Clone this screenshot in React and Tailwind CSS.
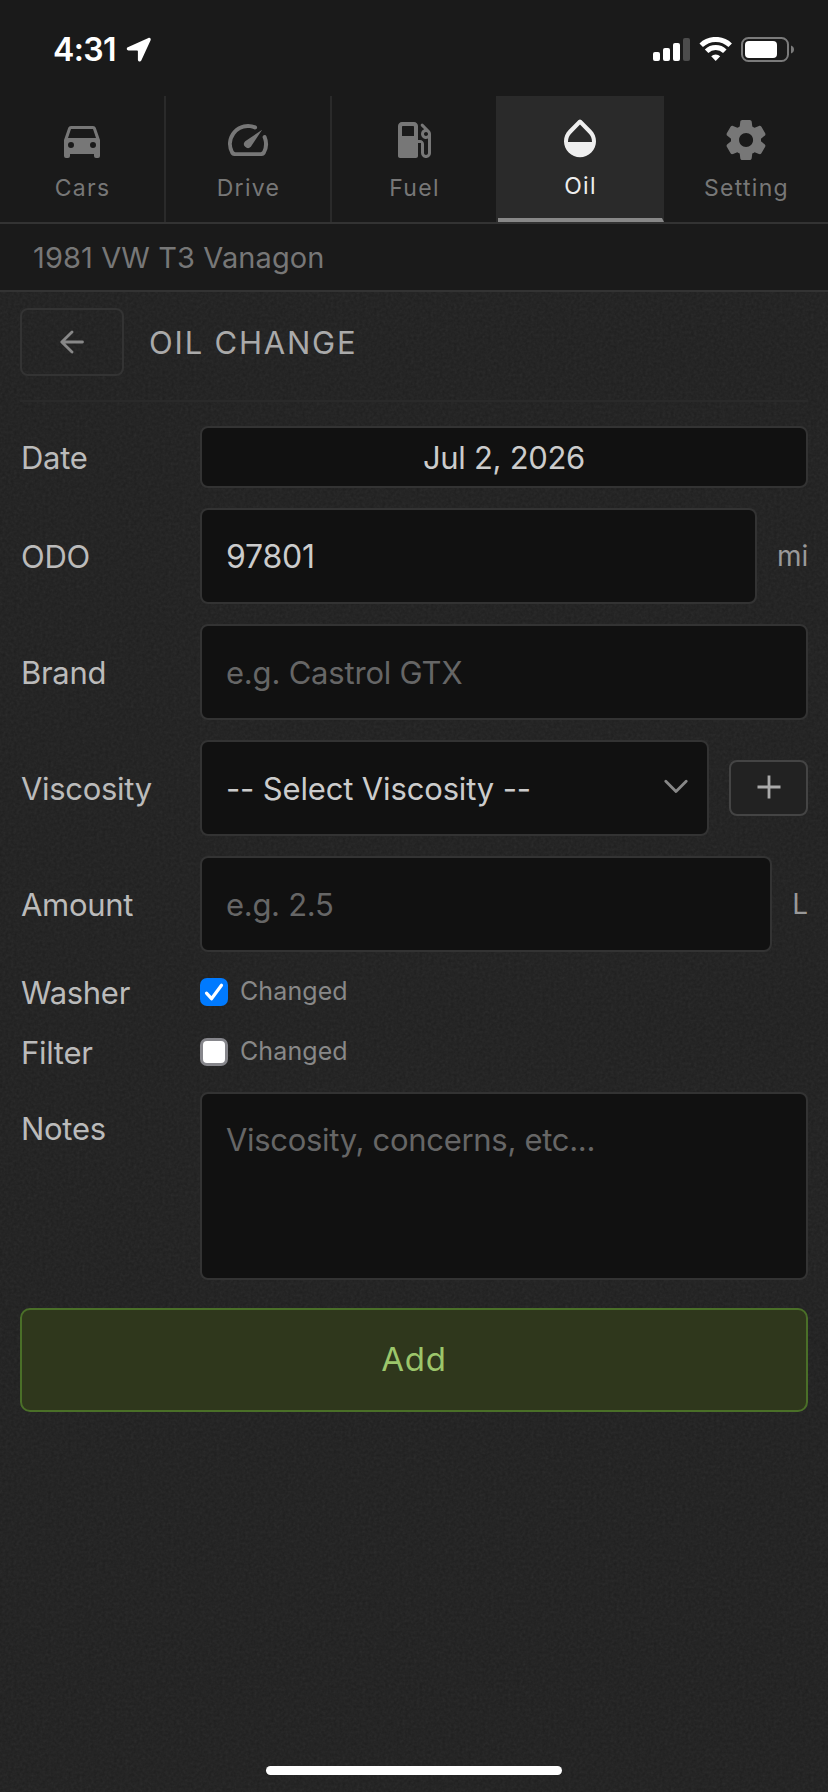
import { useId } from "react";

const MDI = {
  car: "M5,11L6.5,6.5H17.5L19,11M17.5,16A1.5,1.5 0 0,1 16,14.5A1.5,1.5 0 0,1 17.5,13A1.5,1.5 0 0,1 19,14.5A1.5,1.5 0 0,1 17.5,16M6.5,16A1.5,1.5 0 0,1 5,14.5A1.5,1.5 0 0,1 6.5,13A1.5,1.5 0 0,1 8,14.5A1.5,1.5 0 0,1 6.5,16M18.92,6C18.72,5.42 18.16,5 17.5,5H6.5C5.84,5 5.29,5.42 5.08,6L3,12V20A1,1 0 0,0 4,21H5A1,1 0 0,0 6,20V19H18V20A1,1 0 0,0 19,21H20A1,1 0 0,0 21,20V12L18.92,6Z",
  speed: "M19.46 10a1 1 0 0 0-.07 1 7.55 7.55 0 0 1 .52 1.81 8 8 0 0 1-.69 4.73 1 1 0 0 1-.89.53H5.68a1 1 0 0 1-.89-.54A8 8 0 0 1 13 6.06a7.69 7.69 0 0 1 2.11.56 1 1 0 0 0 1-.07 1 1 0 0 0-.17-1.76A10 10 0 0 0 3.35 19a2 2 0 0 0 1.72 1h13.85a2 2 0 0 0 1.74-1 10 10 0 0 0 .55-8.89 1 1 0 0 0-1.75-.11zM10.59 12.59a2 2 0 0 0 2.83 2.83l5.66-8.49z",
  fuel: "M19.77 7.23l.01-.01-3.19-3.19a.75.75 0 0 0-1.06 1.06l1.58 1.58c-1.05.4-1.76 1.47-1.58 2.71.15 1.06 1.04 1.96 2.1 2.1.5.07.95 0 1.37-.19v7.21c0 .55-.45 1-1 1s-1-.45-1-1V14c0-1.1-.9-2-2-2h-1V5c0-1.1-.9-2-2-2H6c-1.1 0-2 .9-2 2v15c0 .55.45 1 1 1h8c.55 0 1-.45 1-1v-6.5h1.5v4.86c0 1.31.94 2.5 2.24 2.63 1.5.15 2.76-1.02 2.76-2.49V9c0-.69-.28-1.32-.73-1.77zM12 10H6V5.5c0-.28.22-.5.5-.5h5c.28 0 .5.22.5.5V10zm6 0c-.55 0-1-.45-1-1s.45-1 1-1 1 .45 1 1-.45 1-1 1z",
  oil: "M17.66 8L12.7 3.03c-.39-.39-1.02-.39-1.41 0L6.34 8C4.78 9.56 4 11.64 4 13.64s.78 4.11 2.34 5.67 3.61 2.35 5.66 2.35 4.1-.79 5.66-2.35S20 15.64 20 13.64 19.22 9.56 17.66 8zM6 14c.01-2 .62-3.27 1.76-4.4L12 5.27l4.24 4.38C17.38 10.77 17.99 12 18 14H6z",
  settings: "M19.5 12c0-.23-.01-.45-.03-.68l1.86-1.41c.4-.3.51-.86.26-1.3l-1.87-3.23c-.25-.44-.79-.62-1.25-.42l-2.15.91c-.37-.26-.76-.49-1.17-.68l-.29-2.31C14.8 2.38 14.37 2 13.87 2h-3.73c-.51 0-.94.38-1 .88l-.29 2.31c-.41.19-.8.42-1.17.68l-2.15-.91c-.46-.2-1-.02-1.25.42L2.41 8.62c-.25.44-.14.99.26 1.3l1.86 1.41c-.02.22-.03.44-.03.67s.01.45.03.68l-1.86 1.41c-.4.3-.51.86-.26 1.3l1.87 3.23c.25.44.79.62 1.25.42l2.15-.91c.37.26.76.49 1.17.68l.29 2.31c.06.5.49.88.99.88h3.73c.5 0 .93-.38.99-.88l.29-2.31c.41-.19.8-.42 1.17-.68l2.15.91c.46.2 1 .02 1.25-.42l1.87-3.23c.25-.44.14-.99-.26-1.3l-1.86-1.41c.03-.23.04-.45.04-.68zm-7.46 3.5c-1.93 0-3.5-1.57-3.5-3.5s1.57-3.5 3.5-3.5 3.5 1.57 3.5 3.5-1.57 3.5-3.5 3.5z",
};

const TABS = [
  { label: "Cars", icon: MDI.car },
  { label: "Drive", icon: MDI.speed },
  { label: "Fuel", icon: MDI.fuel },
  { label: "Oil", icon: MDI.oil, active: true },
  { label: "Setting", icon: MDI.settings },
];

function StatusBar() {
  return (
    <div className="flex h-24 items-start justify-between pl-[53px] pr-[33px] text-white">
      <div className="flex items-center pt-[30px]">
        <span className="w-[73px] whitespace-nowrap text-[32px] leading-10 font-semibold tracking-[-0.6px]">4:31</span>
        <svg className="block h-[26px] w-[26px]" viewBox="0 0 26 26" fill="currentColor">
          <path d="M22.400 1 1.800 10.200C.200 11 .700 13.400 2.500 13.400h8.600c.500 0 .800.300.800.800v8.500c0 2 2.600 2.500 3.400.800L24.600 3.200C25.300 1.600 23.900.300 22.400 1z" />
        </svg>
      </div>
      <div className="flex items-start pt-[37px]">
        <svg className="block h-[25px] w-[38px]" viewBox="0 0 38 25" fill="currentColor">
          <rect x="0" y="15" width="7" height="9" rx="2" />
          <rect x="10" y="11" width="7" height="13" rx="2" />
          <rect x="20" y="6" width="7" height="18" rx="2" />
          <rect x="30" y="1" width="7" height="23" rx="2" opacity="0.22" />
        </svg>
        <svg className="ml-[8px] block h-[25px] w-[34px]" viewBox="0 0 34 25" fill="none" stroke="currentColor">
          <path d="M2.200 8.200a21 21 0 0 1 29 0" strokeWidth="5" />
          <path d="M7.600 14.200a13 13 0 0 1 18.200 0" strokeWidth="5" />
          <path d="M12.200 19.200a6.600 6.600 0 0 1 9 0L16.700 24z" fill="currentColor" stroke="none" />
        </svg>
        <svg className="ml-[8px] block h-[25px] w-[54px]" viewBox="0 0 54 25">
          <rect x="1" y="1" width="46" height="23" rx="6.500" fill="none" stroke="#7b7b7b" strokeWidth="2" />
          <rect x="4" y="4" width="32" height="17" rx="4" fill="#fff" />
          <path d="M50 8.500c2 .7 3 2.200 3 4s-1 3.300-3 4z" fill="#7b7b7b" />
        </svg>
      </div>
    </div>
  );
}

function Tab({ label, icon, active, last }) {
  const tone = active
    ? "border-b-4 border-b-[#888] bg-[#2a2a2a] text-[#eee]"
    : "pt-[2px] text-[#777]";
  const side = last ? "" : "border-r-2 border-r-[#2a2a2a]";
  return (
    <button className={`flex h-[126px] flex-1 flex-col items-center ${tone} ${side}`}>
      <svg className="mt-[18px] block size-12 shrink-0" viewBox="0 0 24 24" fill="currentColor" fillRule="evenodd">
        <path d={icon} />
      </svg>
      <span className="mt-[6px] pl-[1px] text-[23px] leading-9 tracking-[1.3px]">{label}</span>
    </button>
  );
}

function Row({ label, className = "", children }) {
  return (
    <div className={`flex items-center ${className}`}>
      <label className="w-[180px] shrink-0 pt-[2px] pl-[1px] text-[31px] leading-10 tracking-[-0.3px] text-[#bbb]">{label}</label>
      <div className="flex min-w-0 flex-1 items-center">{children}</div>
    </div>
  );
}

function Field({ className = "", children }) {
  return (
    <div className={`flex min-w-0 flex-1 rounded-lg border-2 border-[#333] bg-[#111] leading-10 ${className}`}>
      {children}
    </div>
  );
}

function Grain() {
  const id = useId();
  return (
    <svg className="pointer-events-none absolute inset-0 h-full w-full opacity-[0.08]">
      <filter id={id}>
        <feTurbulence type="fractalNoise" baseFrequency="0.35" numOctaves="2" />
        <feColorMatrix type="saturate" values="0" />
      </filter>
      <rect width="100%" height="100%" filter={`url(#${id})`} />
    </svg>
  );
}

export default function App() {
  return (
    <div className="relative flex h-[1792px] w-[828px] flex-col bg-[#1f1f1f] font-['Inter',sans-serif]">
      <Grain />
      <header className="relative bg-[#1a1a1a]">
        <StatusBar />
        <nav className="flex border-b-2 border-[#333]">
          {TABS.map((t, i) => (
            <Tab key={t.label} {...t} last={i === TABS.length - 1} />
          ))}
        </nav>
        <div className="flex h-[68px] items-center border-b-2 border-[#333] pt-[2px] pl-[33px] text-[29px] tracking-[0.1px] text-[#777]">
          1981 VW T3 Vanagon
        </div>
      </header>
      <main className="relative flex-1 px-5">
        <div className="flex h-[110px] items-start border-b-2 border-[#2a2a2a] pt-4">
          <button className="flex h-[68px] w-[104px] items-center justify-center rounded-lg border-2 border-[#333] text-[#888]">
            <svg className="block h-6 w-6" viewBox="0 0 24 24" fill="none" stroke="currentColor" strokeWidth="2.800" strokeLinecap="round" strokeLinejoin="round">
              <path d="M22.500 12H2M12 2 1.800 12 12 22" />
            </svg>
          </button>
          <h1 className="ml-6 pt-[15px] pl-[1px] text-[31px] leading-10 tracking-[1.8px] text-[#aaa]">OIL CHANGE</h1>
        </div>
        <div className="flex flex-col gap-5 pt-6">
          <Row label="Date">
            <Field className="h-[62px] items-center justify-center pt-[2px] text-[31px] tracking-[-0.3px] text-[#ccc]">Jul 2, 2026</Field>
          </Row>
          <Row label="ODO">
            <Field className="h-24 items-center pt-[2px] pl-6 text-[32px] tracking-[-0.2px] text-[#ccc]">97801</Field>
            <span className="ml-5 w-[31px] text-right text-[28px] text-[#999]">mi</span>
          </Row>
          <Row label="Brand">
            <Field className="h-24 items-center pt-[2px] pl-6 text-[31px] tracking-[-0.2px] text-[#666]">e.g. Castrol GTX</Field>
          </Row>
          <Row label="Viscosity">
            <Field className="h-24 items-center justify-between pl-6 pr-[19px] text-[31px] tracking-[-0.15px] text-[#ccc]">
              <span className="pt-[2px]">-- Select Viscosity --</span>
              <svg className="mb-1 block h-[15px] w-6" viewBox="0 0 24 15" fill="none" stroke="#888" strokeWidth="2.800" strokeLinecap="round" strokeLinejoin="round">
                <path d="m1.800 2.200 10.200 10.300 10.200-10.300" />
              </svg>
            </Field>
            <button className="ml-5 flex h-14 w-[79px] items-center justify-center rounded-lg border-2 border-[#444] bg-[#222] text-[#aaa]">
              <svg className="mb-[2px] block size-6" viewBox="0 0 24 24" stroke="currentColor" strokeWidth="2.800">
                <path d="M12 .5v23M.5 12h23" />
              </svg>
            </button>
          </Row>
          <Row label="Amount">
            <Field className="h-24 items-center pt-[2px] pl-6 text-[31px] tracking-[-0.3px] text-[#666]">e.g. 2.5</Field>
            <span className="ml-5 w-4 text-right text-[28px] text-[#999]">L</span>
          </Row>
          <Row label="Washer" className="h-10">
            <svg className="block size-7" viewBox="0 0 28 28">
              <rect width="28" height="28" rx="7" fill="#007aff" />
              <path d="m6.500 15.200 5 5.500 10-13.500" fill="none" stroke="#fff" strokeWidth="3.200" strokeLinecap="round" strokeLinejoin="round" />
            </svg>
            <span className="ml-3 pb-[1px] text-[25px] tracking-[0.1px] text-[#888]">Changed</span>
          </Row>
          <Row label="Filter" className="h-10">
            <svg className="block size-7" viewBox="0 0 28 28">
              <rect x="1.500" y="1.500" width="25" height="25" rx="5.500" fill="#fff" stroke="#86868b" strokeWidth="3" />
            </svg>
            <span className="ml-3 pb-[1px] text-[25px] tracking-[0.1px] text-[#888]">Changed</span>
          </Row>
          <Row label="Notes" className="items-start [&>label]:pt-[17px]">
            <Field className="h-[188px] items-start pt-[26px] pl-6 text-[31px] tracking-[-0.3px] text-[#666]">Viscosity, concerns, etc...</Field>
          </Row>
          <button className="mt-2 flex h-[104px] items-center justify-center rounded-[10px] border-2 border-[#4a6f28] bg-[#2f371c] text-[33px] tracking-[0.7px] text-[#9cc66b]">
            Add
          </button>
        </div>
      </main>
      <footer className="relative flex h-[27px] justify-center pt-[1px]">
        <div className="h-[9px] w-[296px] rounded-full bg-white" />
      </footer>
    </div>
  );
}
